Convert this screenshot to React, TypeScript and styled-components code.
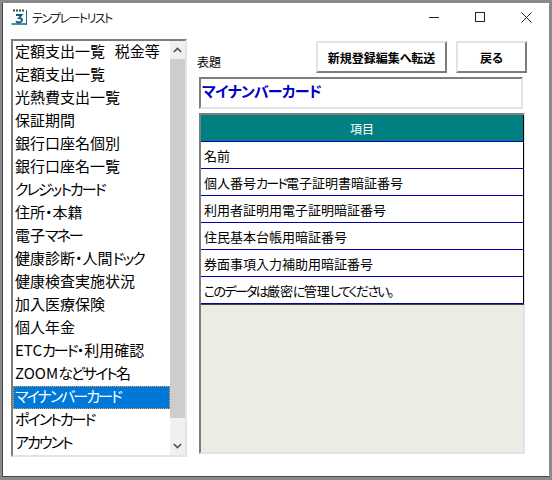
import styled, { createGlobalStyle } from 'styled-components';

const items = [
    '定額支出一覧  税金等',
    '定額支出一覧',
    '光熱費支出一覧',
    '保証期間',
    '銀行口座名個別',
    '銀行口座名一覧',
    'クレジットカード',
    '住所・本籍',
    '電子マネー',
    '健康診断・人間ドック',
    '健康検査実施状況',
    '加入医療保険',
    '個人年金',
    'ETCカード・利用確認',
    'ZOOMなどサイト名',
    'マイナンバーカード',
    'ポイントカード',
    'アカウント',
];

const rows = [
    '名前',
    '個人番号カード電子証明書暗証番号',
    '利用者証明用電子証明暗証番号',
    '住民基本台帳用暗証番号',
    '券面事項入力補助用暗証番号',
    'このデータは厳密に管理してください。',
];

const GlobalStyle = createGlobalStyle`
  html, body {
    margin: 0;
    padding: 0;
    background: #8a8a88;
  }
  * {
    box-sizing: border-box;
  }
`;

const Screen = styled.div`
  width: 552px;
  height: 480px;
  padding: 3px 3px 3px 2px;
  overflow: hidden;
  font-family: "Noto Sans CJK JP", "Noto Sans", sans-serif;
  font-feature-settings: "palt";
  color: #000;
`;

const Window = styled.div`
  height: 474px;
  background: #fff;
  border-left: 1px solid #3c4a50;
  border-bottom: 1px solid #3c4a50;
  display: flex;
  flex-direction: column;
`;

const TitleBar = styled.div`
  height: 36px;
  flex: none;
  display: flex;
  align-items: flex-start;
  padding: 6px 0 0 8px;
`;

const TitleText = styled.div`
  font-size: 12px;
  line-height: 18px;
  margin-left: 4px;
  color: #222;
`;

const Controls = styled.div`
  margin-left: auto;
  display: flex;
  margin-top: -1px;
`;

const Control = styled.div`
  width: 46px;
  height: 18px;
  display: flex;
  align-items: center;
  justify-content: center;
`;

const Body = styled.div`
  flex: 1;
  display: flex;
  padding: 0 0 0 8px;
  min-height: 0;
`;

const ListBox = styled.div`
  width: 176px;
  height: 418px;
  flex: none;
  display: flex;
  border-top: 2px solid #7d7d7d;
  border-left: 2px solid #7d7d7d;
  border-right: 2px solid #e3e3e3;
  border-bottom: 2px solid #e3e3e3;
`;

const List = styled.div`
  flex: 1;
  min-width: 0;
  overflow: hidden;
`;

const ListItem = styled.div<{ $selected?: boolean }>`
  height: 23px;
  line-height: 20px;
  font-size: 15px;
  white-space: pre;
  word-spacing: 1.5px;
  padding-left: 2px;
  background: ${(p) => (p.$selected ? '#0078d7' : '#fff')};
  color: ${(p) => (p.$selected ? '#fff' : '#000')};
  outline: ${(p) => (p.$selected ? '1px dotted #f0a040' : 'none')};
  outline-offset: -1px;
`;

// kana in the original font is much narrower than its kanji
const Kana = styled.span`
  letter-spacing: -0.13em;
`;

const ScrollBar = styled.div`
  width: 15px;
  flex: none;
  background: #f0f0f0;
  display: flex;
  flex-direction: column;
`;

const ScrollButton = styled.div`
  height: 18px;
  flex: none;
  display: flex;
  align-items: center;
  justify-content: center;
`;

const ScrollThumb = styled.div`
  height: 359px;
  flex: none;
  background: #cdcdcd;
`;

const ScrollRest = styled.div`
  flex: 1;
`;

const Main = styled.div`
  flex: none;
  width: 328px;
  margin-left: 10px;
  display: flex;
  flex-direction: column;
`;

const TopRow = styled.div`
  height: 36px;
  margin-top: 2px;
  display: flex;
  align-items: flex-start;
`;

const Label = styled.div`
  font-size: 12px;
  line-height: 16px;
  margin-top: 13px;
  width: 119px;
  flex: none;
`;

const Button = styled.div<{ $w: number }>`
  width: ${(p) => p.$w}px;
  height: 32px;
  flex: none;
  margin-right: 9px;
  font-size: 12px;
  font-weight: 700;
  display: flex;
  align-items: center;
  justify-content: center;
  background: #fff;
  border-top: 2px solid #e3e3e3;
  border-left: 2px solid #e3e3e3;
  border-right: 2px solid #7d7d7d;
  border-bottom: 2px solid #7d7d7d;
`;

const TitleInput = styled.div`
  width: 324px;
  height: 32px;
  margin-left: 2px;
  border-top: 2px solid #7d7d7d;
  border-left: 2px solid #7d7d7d;
  border-right: 2px solid #e3e3e3;
  border-bottom: 2px solid #e3e3e3;
  font-size: 15px;
  font-weight: 700;
  letter-spacing: -0.7px;
  line-height: 24px;
  padding-left: 1px;
  color: #0000c8;
`;

const Grid = styled.div`
  width: 326px;
  height: 341px;
  margin: 4px 0 0 2px;
  background: #ecece4;
  border-top: 2px solid #7d7d7d;
  border-left: 2px solid #7d7d7d;
  border-right: 2px solid #e3e3e3;
  border-bottom: 2px solid #e3e3e3;
`;

const GridInner = styled.div`
  width: 323px;
  border-right: 1px solid #000;
  box-shadow: 0 1px 0 #444;
`;

const GridHeader = styled.div`
  height: 27px;
  background: #008080;
  border-bottom: 1px solid #0000b4;
  color: #fff;
  font-size: 12px;
  line-height: 27px;
  text-align: center;
`;

const GridRow = styled.div`
  height: 27px;
  background: #fff;
  border-bottom: 1px solid #0000b4;
  font-size: 13px;
  line-height: 28px;
  padding-left: 3px;
  white-space: nowrap;
`;

const withKana = (text: string) =>
    text.split(/([ぁ-んァ-ヶー。]+)/).map((part, i) =>
        i % 2 === 1 ? <Kana key={i}>{part}</Kana> : part
    );

const App = () => (
    <>
        <GlobalStyle />
        <Screen>
            <Window>
                <TitleBar>
                    <svg width="17" height="16" viewBox="0 0 17 16">
                        <path d="M2 1.5h11" stroke="#444" strokeWidth="2" strokeDasharray="2 1" />
                        <path d="M0.5 15h15.5" stroke="#0a6a8a" strokeWidth="1.5" />
                        <path d="M15.5 1v14.5" stroke="#0a6a8a" />
                        <path d="M5 6h5.5l-2.5 3c2.2 0 3 1 3 2s-1 2.5-3 2.5c-1.500 0-2.500-.5-3-1.200" fill="none" stroke="#0a5a7a" strokeWidth="1.800" />
                    </svg>
                    <TitleText>{withKana('テンプレートリスト')}</TitleText>
                    <Controls>
                        <Control>
                            <svg width="11" height="11" viewBox="0 0 11 11"><path d="M0 5.5h10" stroke="#222" /></svg>
                        </Control>
                        <Control>
                            <svg width="11" height="11" viewBox="0 0 11 11"><rect x="0.5" y="0.5" width="9" height="9" fill="none" stroke="#222" /></svg>
                        </Control>
                        <Control>
                            <svg width="11" height="11" viewBox="0 0 11 11"><path d="M0.5 0.5l10 10M10.500 0.500l-10 10" stroke="#222" /></svg>
                        </Control>
                    </Controls>
                </TitleBar>
                <Body>
                    <ListBox>
                        <List>
                            {items.map((item, i) => (
                                <ListItem key={item} $selected={i === 15}>{withKana(item)}</ListItem>
                            ))}
                        </List>
                        <ScrollBar>
                            <ScrollButton>
                                <svg width="9" height="6" viewBox="0 0 9 6"><path d="M0.800 5L4.500 1.400 8.200 5" fill="none" stroke="#555" strokeWidth="1.700" /></svg>
                            </ScrollButton>
                            <ScrollThumb />
                            <ScrollRest />
                            <ScrollButton>
                                <svg width="9" height="6" viewBox="0 0 9 6"><path d="M0.800 1L4.500 4.600 8.200 1" fill="none" stroke="#555" strokeWidth="1.700" /></svg>
                            </ScrollButton>
                        </ScrollBar>
                    </ListBox>
                    <Main>
                        <TopRow>
                            <Label>表題</Label>
                            <Button $w={131}>新規登録編集へ転送</Button>
                            <Button $w={71}>戻る</Button>
                        </TopRow>
                        <TitleInput>マイナンバーカード</TitleInput>
                        <Grid>
                            <GridInner>
                                <GridHeader>項目</GridHeader>
                                {rows.map((row) => (
                                    <GridRow key={row}>{withKana(row)}</GridRow>
                                ))}
                            </GridInner>
                        </Grid>
                    </Main>
                </Body>
            </Window>
        </Screen>
    </>
);

export default App;
